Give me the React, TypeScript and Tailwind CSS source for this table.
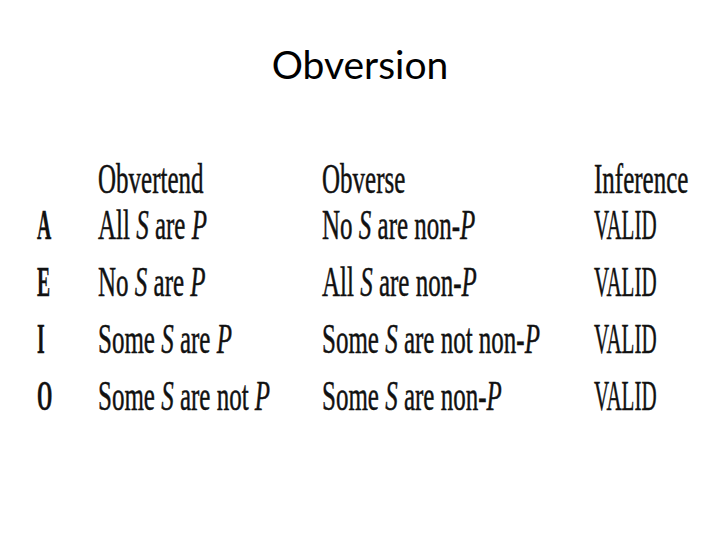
import React from "react";

const serif = { fontFamily: '"Liberation Serif", "Times New Roman", serif' };

function Cell({ children, scale = "c", bold = false }: { children: React.ReactNode; scale?: "l" | "c" | "v"; bold?: boolean }) {
  const cls =
    scale === "l"
      ? "scale-x-[0.47]"
      : scale === "v"
      ? "scale-x-[0.5]"
      : "scale-x-[0.595]";
  return (
    <div className="overflow-visible whitespace-nowrap">
      <span className={`inline-block origin-left ${cls} ${bold ? "font-bold" : ""}`}>{children}</span>
    </div>
  );
}

const rows: { l: string; a: React.ReactNode; b: React.ReactNode }[] = [
  { l: "A", a: <>All <i>S</i> are <i>P</i></>, b: <>No <i>S</i> are non-<i>P</i></> },
  { l: "E", a: <>No <i>S</i> are <i>P</i></>, b: <>All <i>S</i> are non-<i>P</i></> },
  { l: "I", a: <>Some <i>S</i> are <i>P</i></>, b: <>Some <i>S</i> are not non-<i>P</i></> },
  { l: "O", a: <>Some <i>S</i> are not <i>P</i></>, b: <>Some <i>S</i> are non-<i>P</i></> },
];

export default function App() {
  return (
    <div className="w-[720px] h-[540px] bg-white overflow-hidden text-black">
      <div
        className="pt-[41px] text-center text-[39px] leading-[47px] text-black"
        style={{ fontFamily: 'Lato, "Open Sans", sans-serif' }}
      >
        Obversion
      </div>
      <div
        className="mt-[73px] ml-[37px] grid grid-cols-[61px_224px_272px_auto] grid-rows-[36px_57px_57px_57px_57px] text-[42px] leading-[57px] text-[#111] [-webkit-text-stroke:0.5px_#111]"
        style={serif}
      >
        <div className="leading-[36px]" />
        <div className="leading-[36px]"><Cell>Obvertend</Cell></div>
        <div className="leading-[36px]"><Cell>Obverse</Cell></div>
        <div className="leading-[36px]"><Cell>Inference</Cell></div>
        {rows.map((r) => (
          <React.Fragment key={r.l}>
            <Cell scale="l" bold>{r.l}</Cell>
            <Cell>{r.a}</Cell>
            <Cell>{r.b}</Cell>
            <Cell scale="v">VALID</Cell>
          </React.Fragment>
        ))}
      </div>
    </div>
  );
}
